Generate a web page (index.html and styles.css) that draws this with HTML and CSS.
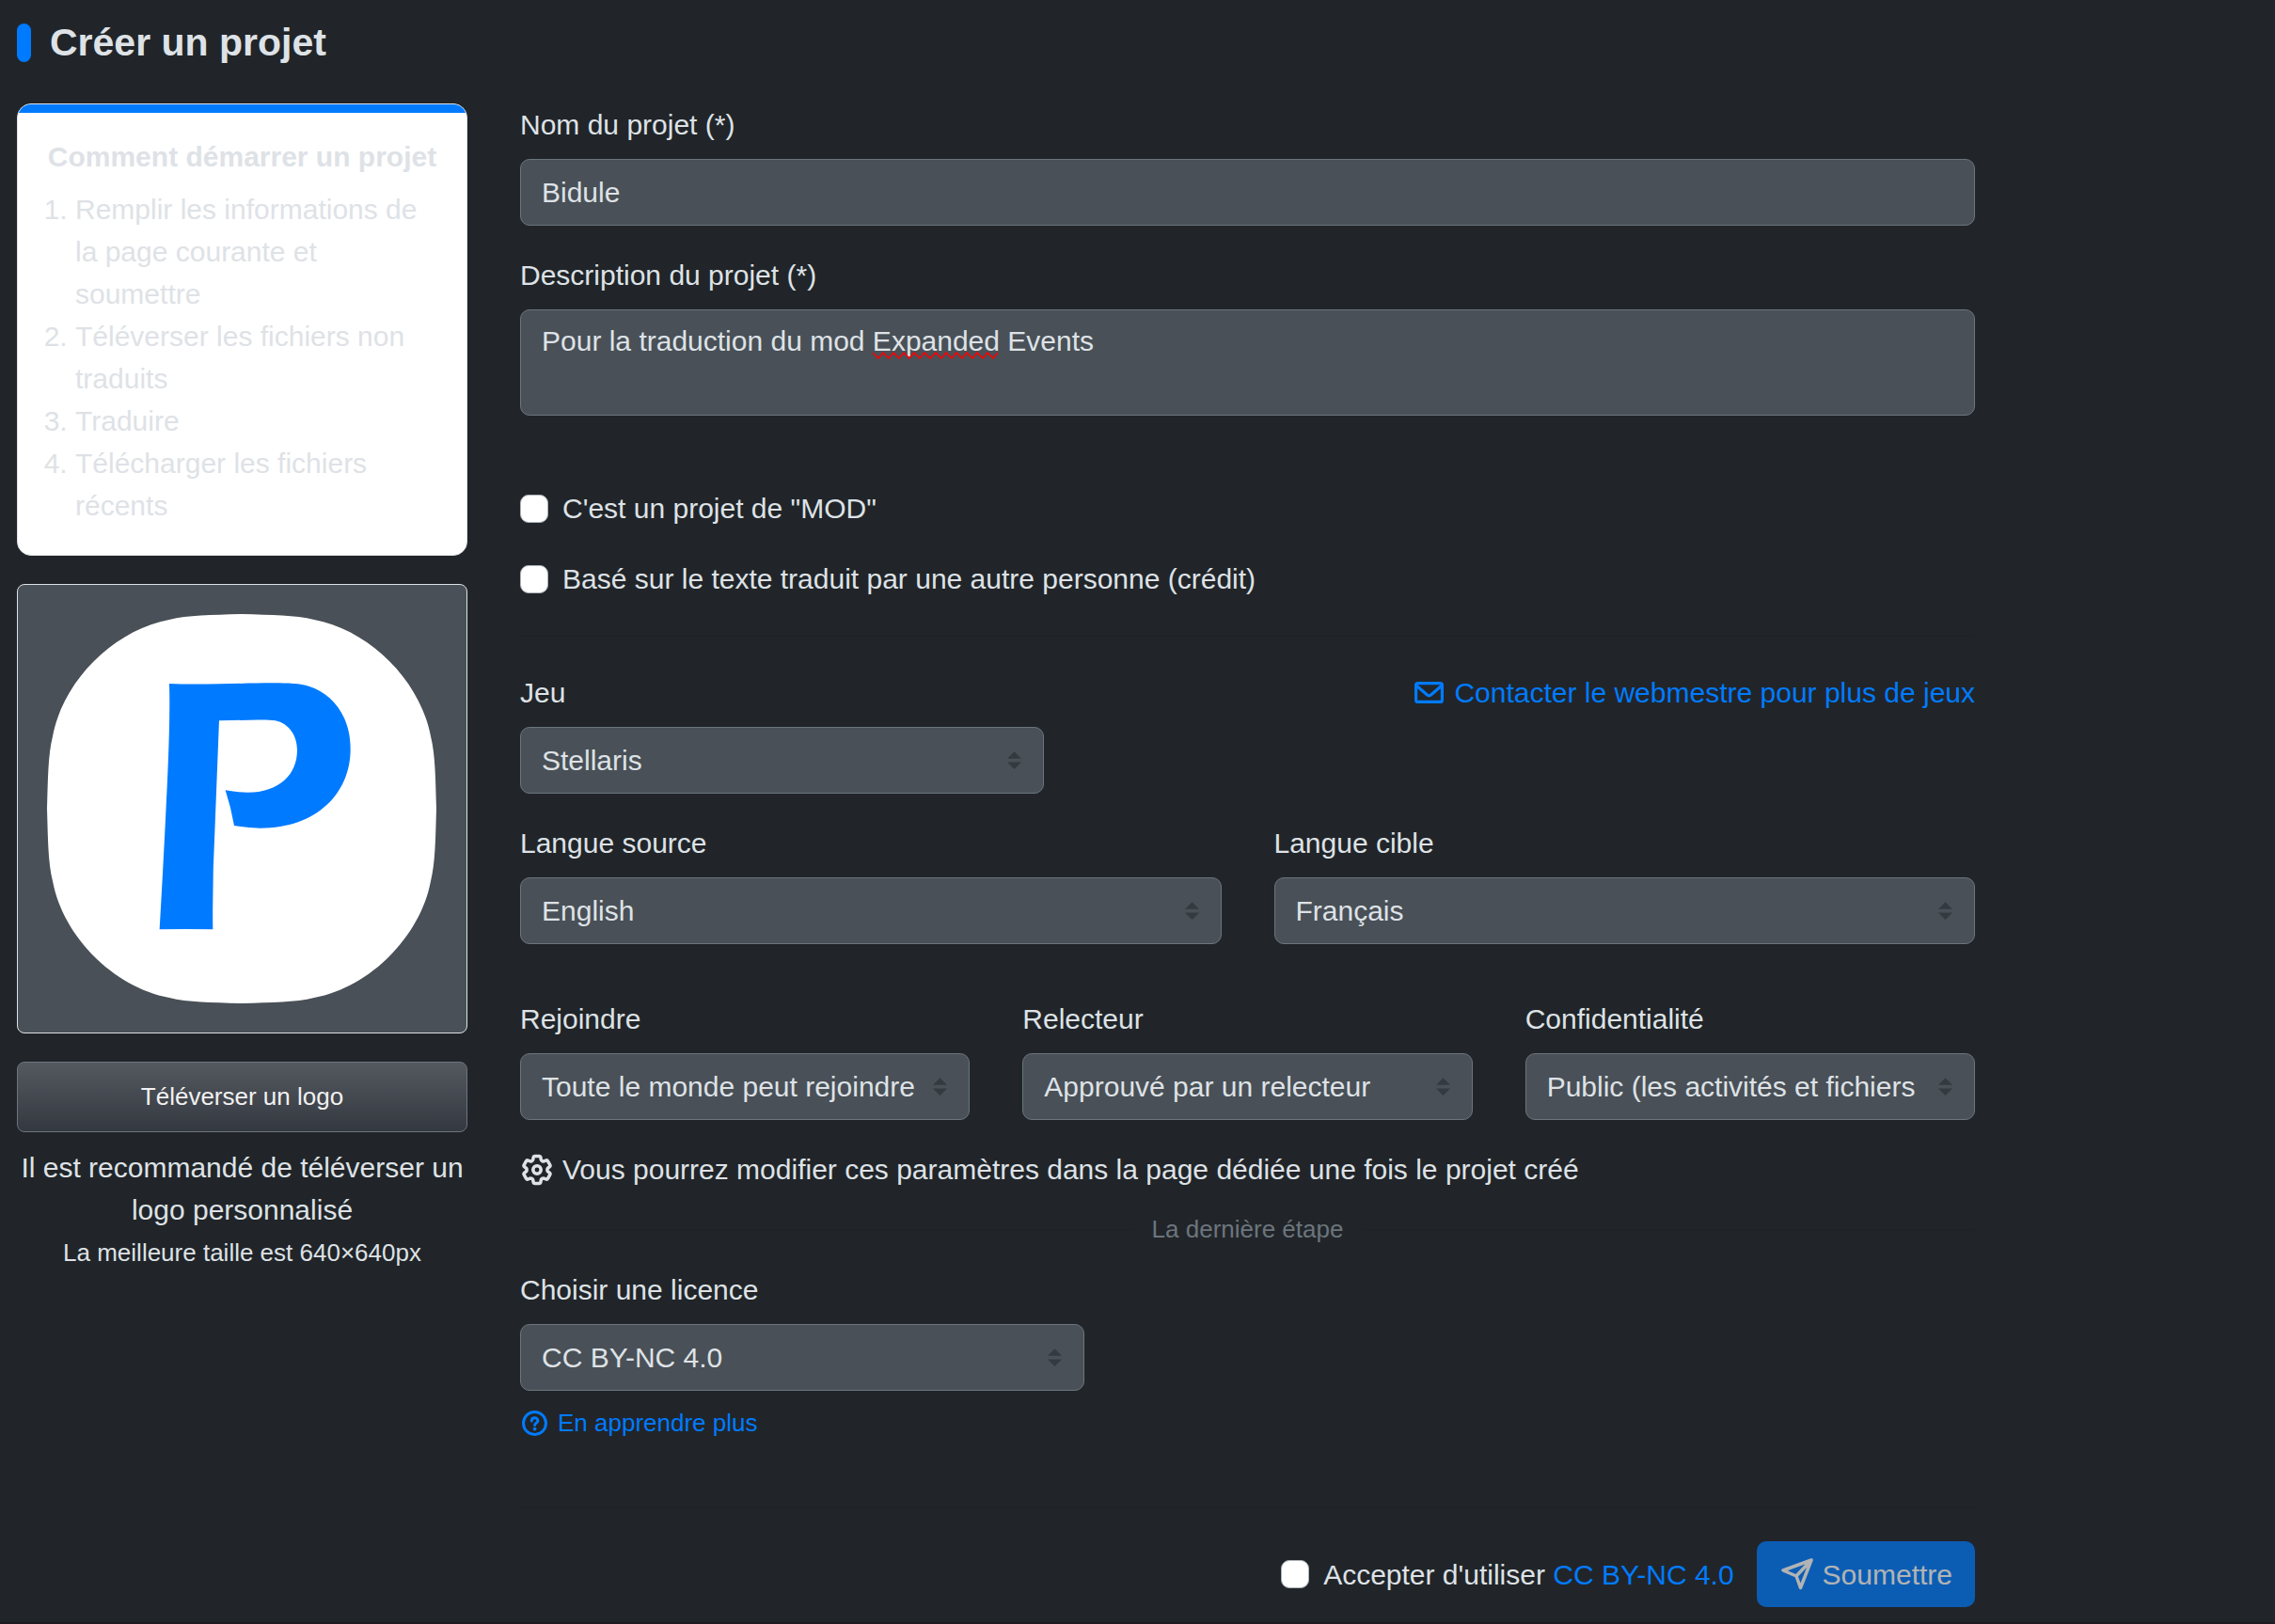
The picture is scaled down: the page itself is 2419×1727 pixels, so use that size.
FILE: index.html
```html
<!DOCTYPE html>
<html lang="fr">
<head>
<meta charset="utf-8">
<meta name="viewport" content="width=device-width, initial-scale=1">
<title>Créer un projet</title>
<link rel="stylesheet" href="styles.css">
</head>
<body>
<main class="page">
  <header class="page-header">
    <span class="page-mark"></span>
    <h1 class="page-title">Créer un projet</h1>
  </header>

  <div class="columns">
    <aside class="sidebar">
      <section class="guide">
        <h2 class="guide-title">Comment démarrer un projet</h2>
        <ol class="guide-steps">
          <li>Remplir les informations de la page courante et soumettre</li>
          <li>Téléverser les fichiers non traduits</li>
          <li>Traduire</li>
          <li>Télécharger les fichiers récents</li>
        </ol>
      </section>

      <div class="logo-frame">
        <svg class="logo" viewBox="0 0 415 414" role="img" aria-label="Logo du projet">
          <path fill="#fff" d="M207 0C175 1 150 1 130 6C71 17 17 71 6 130C1 150 1 175 0 207C1 239 1 264 6 284C17 343 71 397 130 408C150 413 175 413 207 414C239 413 264 413 284 408C343 397 397 343 408 284C413 264 413 239 414 207C413 175 413 150 408 130C397 71 343 17 284 6C264 1 239 1 207 0Z"/>
          <path fill="#007bff" transform="scale(.3333) translate(-150 -158)" d="M540 380Q600 383 700 381C760 380 820 378 870 378C920 378 960 380 985 388C1065 412 1119 490 1118 590C1118 730 1010 841 830 841Q785 840 747 833Q737 775 719 720Q755 727 790 727C890 727 948 670 948 592C948 540 915 500 870 497C820 493 760 498 699 498L686 830Q677 1000 679 1164Q595 1162 509 1164Q523 920 530 770Q544 500 540 380Z"/>
        </svg>
      </div>

      <button class="upload" type="button">Téléverser un logo</button>
      <div class="upload-help">
        <p>Il est recommandé de téléverser un logo personnalisé</p>
        <p class="small">La meilleure taille est 640×640px</p>
      </div>
    </aside>

    <form class="form">
      <div class="field">
        <label for="name">Nom du projet (*)</label>
        <input class="control" id="name" type="text" value="Bidule">
      </div>

      <div class="field">
        <label for="description">Description du projet (*)</label>
        <div class="textarea-wrap">
          <textarea class="control" id="description" rows="2">Pour la traduction du mod Expanded Events</textarea>
          <svg class="spelling" viewBox="0 0 136 8" aria-hidden="true"><path d="M0 1l6 6 5-6 6 6 5-6 6 6 5-6 6 6 5-6 6 6 5-6 6 6 6-6 6 6 5-6 6 6 5-6 6 6 5-6 6 6 5-6 6 6 5-6 6 6 5-6"/></svg>
        </div>
      </div>

      <div class="checks">
        <div class="check"><input type="checkbox" id="mod"><label for="mod">C'est un projet de "MOD"</label></div>
        <div class="check"><input type="checkbox" id="credit"><label for="credit">Basé sur le texte traduit par une autre personne (crédit)</label></div>
      </div>

      <hr class="rule">

      <div class="game-row">
        <div class="field game">
          <label for="game">Jeu</label>
          <select class="control" id="game"><option>Stellaris</option></select>
        </div>
        <a class="icon-link" href="#contact">
          <svg class="mail-icon" viewBox="0 0 31 23" aria-hidden="true"><rect x="1.6" y="1.6" width="27.800" height="19.800" rx="2"/><path d="M2 4l11.500 10q2 1.500 4 0L29 4"/></svg>
          <span>Contacter le webmestre pour plus de jeux</span>
        </a>
      </div>

      <div class="grid two">
        <div class="field">
          <label for="source">Langue source</label>
          <select class="control" id="source"><option>English</option></select>
        </div>
        <div class="field">
          <label for="target">Langue cible</label>
          <select class="control" id="target"><option>Français</option></select>
        </div>
      </div>

      <div class="grid three">
        <div class="field">
          <label for="join">Rejoindre</label>
          <select class="control" id="join"><option>Toute le monde peut rejoindre</option></select>
        </div>
        <div class="field">
          <label for="review">Relecteur</label>
          <select class="control" id="review"><option>Approuvé par un relecteur</option></select>
        </div>
        <div class="field">
          <label for="privacy">Confidentialité</label>
          <select class="control" id="privacy"><option>Public (les activités et fichiers</option></select>
        </div>
      </div>

      <p class="note">
        <svg class="gear-icon" viewBox="1.5 1.5 21 21" aria-hidden="true"><path d="M9.594 3.94c.09-.542.56-.94 1.11-.94h2.593c.55 0 1.02.398 1.11.94l.213 1.281c.063.374.313.686.645.87.074.04.147.083.22.127.325.196.72.257 1.075.124l1.217-.456a1.125 1.125 0 0 1 1.37.49l1.296 2.247a1.125 1.125 0 0 1-.26 1.431l-1.003.827c-.293.241-.438.613-.43.992a7.723 7.723 0 0 1 0 .255c-.008.378.137.75.43.991l1.004.827c.424.35.534.955.26 1.43l-1.298 2.247a1.125 1.125 0 0 1-1.369.491l-1.217-.456c-.355-.133-.75-.072-1.076.124a6.47 6.47 0 0 1-.22.128c-.331.183-.581.495-.644.869l-.213 1.281c-.09.543-.56.94-1.11.94h-2.594c-.55 0-1.019-.398-1.11-.94l-.213-1.281c-.062-.374-.312-.686-.644-.87a6.52 6.52 0 0 1-.22-.127c-.325-.196-.72-.257-1.076-.124l-1.217.456a1.125 1.125 0 0 1-1.369-.49l-1.297-2.247a1.125 1.125 0 0 1 .26-1.431l1.004-.827c.292-.24.437-.613.43-.991a6.932 6.932 0 0 1 0-.255c.007-.38-.138-.751-.43-.992l-1.004-.827a1.125 1.125 0 0 1-.26-1.43l1.297-2.247a1.125 1.125 0 0 1 1.37-.491l1.216.456c.356.133.751.072 1.076-.124.072-.044.146-.086.22-.128.332-.183.582-.495.644-.869l.214-1.28Z"/><circle cx="12" cy="12" r="2.6"/></svg>
        <span>Vous pourrez modifier ces paramètres dans la page dédiée une fois le projet créé</span>
      </p>

      <div class="divider"><span>La dernière étape</span></div>

      <div class="field license">
        <label for="license">Choisir une licence</label>
        <select class="control" id="license"><option>CC BY-NC 4.0</option></select>
      </div>
      <a class="icon-link more" href="#licence">
        <svg class="help-icon" viewBox="0 0 27 27" aria-hidden="true"><circle cx="13.5" cy="13.5" r="12"/><path d="M10.3 11c0-4.2 6.6-4.2 6.6 0 0 2.2-3.3 2.2-3.3 4.500"/><circle class="dot" cx="13.6" cy="19.600" r="1.9"/></svg>
        <span>En apprendre plus</span>
      </a>

      <hr class="rule last">

      <div class="actions">
        <div class="check">
          <input type="checkbox" id="accept">
          <label for="accept">Accepter d'utiliser <a href="#cc">CC BY-NC 4.0</a></label>
        </div>
        <button class="submit" type="submit" disabled>
          <svg class="send-icon" viewBox="0 0 34 34" aria-hidden="true"><path d="M32 2L2 13l14 6 4.500 12.500zM32 2L16 19"/></svg>
          <span>Soumettre</span>
        </button>
      </div>
    </form>
  </div>
</main>
<footer class="footer"></footer>
</body>
</html>
```
FILE: styles.css
```css
*, *::before, *::after { box-sizing: border-box; }

body {
  margin: 0;
  background: #212529;
  color: #dee2e6;
  font-family: "Liberation Sans", Arial, sans-serif;
  font-size: 30px;
  line-height: 45px;
}

h1, h2, p, ol { margin: 0; }
a { color: #007bff; text-decoration: none; }
svg { display: block; flex: none; }

.page { max-width: 2118px; padding: 20px 18px 16px; }

.page-header { display: flex; align-items: center; gap: 20px; margin-bottom: 40px; }
.page-mark { width: 15px; height: 41px; border-radius: 8px; background: #007bff; }
.page-title { font-size: 41px; line-height: 50px; }

.columns {
  display: grid;
  grid-template-columns: minmax(0, 479fr) minmax(0, 1547fr);
  gap: 56px;
  align-items: start;
}

/* Sidebar */
.guide {
  overflow: hidden;
  padding-bottom: 30px;
  border: 1px solid #dee2e6;
  border-radius: 15px;
  background: #fff;
}
.guide::before { content: ""; display: block; height: 9px; background: #007bff; }
.guide-title { margin: 29px 0 15px; font-size: 30px; line-height: 36px; text-align: center; }
.guide-steps { padding: 0 30px 0 61px; }

.logo-frame {
  margin: 30px 0;
  padding: 31px;
  border: 1px solid #dee2e6;
  border-radius: 8px;
  background: #495057;
}
.logo { width: 100%; height: auto; }

.upload {
  display: block;
  width: 100%;
  height: 75px;
  border: 1px solid #6c757d;
  border-radius: 8px;
  background: linear-gradient(#54585f, #343840);
  color: #f1f1f1;
  font: inherit;
  font-size: 26px;
}
.upload-help { margin-top: 15px; text-align: center; }
.small { font-size: 26px; line-height: 47px; }

/* Form */
.field label { display: block; margin-bottom: 14px; }
.control {
  display: block;
  width: 100%;
  height: 71px;
  margin: 0;
  padding: 12px 22px;
  border: 1px solid #6c757d;
  border-radius: 10px;
  background: #495057;
  color: #dee2e6;
  font: inherit;
}
textarea.control { height: 113px; padding-top: 10px; resize: none; overflow: hidden; }
select.control {
  appearance: none;
  padding-right: 52px;
  background: #495057 url("data:image/svg+xml,%3Csvg xmlns='http://www.w3.org/2000/svg' viewBox='0 0 4 5'%3E%3Cpath fill='%23343a40' d='M2 0L0 2h4zm0 5L0 3h4z'/%3E%3C/svg%3E") no-repeat right 23px center / 15px 19px;
}

.field + .field { margin-top: 30px; }
.grid .field + .field { margin-top: 0; }

/* Spell-check mark laid over the text box */
.textarea-wrap { position: relative; }
.spelling {
  position: absolute;
  left: 375px;
  top: 45px;
  width: 136px;
  height: 8px;
  fill: none;
  stroke: #f00;
  stroke-width: 1.5;
}

.checks { display: grid; gap: 30px; margin-top: 76px; }
.check { display: flex; align-items: center; gap: 15px; }
.check input {
  appearance: none;
  flex: none;
  width: 30px;
  height: 30px;
  margin: 0;
  border: 1px solid #adb5bd;
  border-radius: 9px;
  background: #fff;
}

.rule { margin: 38px 0 37px; border: 0; border-top: 1px solid #1e2125; }
.rule.last { margin: 69px 0 36px; }

.game-row { display: flex; justify-content: space-between; align-items: flex-start; }
.game { width: 36%; }
.icon-link { display: flex; align-items: center; gap: 11px; }
.mail-icon { width: 31px; height: 23px; }
.mail-icon, .help-icon { fill: none; stroke: #007bff; stroke-width: 3; stroke-linecap: round; }
.mail-icon { stroke-width: 3.2; }

.grid { display: grid; column-gap: 56px; }
.two { grid-template-columns: repeat(2, minmax(0, 1fr)); margin-top: 30px; }
.three { grid-template-columns: repeat(3, minmax(0, 1fr)); margin-top: 57px; }

.note { display: flex; align-items: center; gap: 10px; margin-top: 30px; padding-left: 1px; }
.gear-icon { width: 34px; height: 34px; fill: none; stroke: #dee2e6; stroke-width: 2.2; }

.divider {
  display: flex;
  align-items: center;
  gap: 20px;
  margin: 22px 0;
  color: #6c757d;
  font-size: 26px;
  line-height: 39px;
}
.divider::before, .divider::after { content: ""; flex: 1; height: 1px; background: #1e2125; }

.license { max-width: 600px; }
.more { width: fit-content; margin-top: 15px; padding-left: 2px; font-size: 26px; line-height: 39px; }
.help-icon { width: 27px; height: 27px; }
.help-icon .dot { fill: #007bff; stroke: none; }

.actions { display: flex; justify-content: flex-end; align-items: center; gap: 24px; }
.submit {
  display: flex;
  align-items: center;
  gap: 10px;
  height: 70px;
  padding: 0 24px 0 26px;
  border: 0;
  border-radius: 10px;
  background: #007bff;
  color: #fff;
  font: inherit;
  opacity: .65;
}
.send-icon { width: 34px; height: 34px; fill: none; stroke: #fff; stroke-width: 3.5; stroke-linejoin: round; }

.footer { height: 2px; background: #1f1b20; }
```
